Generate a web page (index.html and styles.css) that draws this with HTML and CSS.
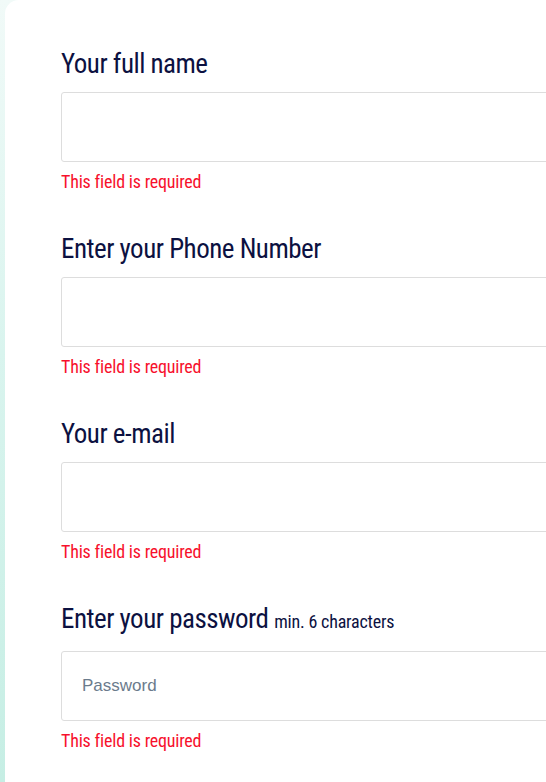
FILE: index.html
```html
<!DOCTYPE html>
<html lang="en">
<head>
<meta charset="utf-8">
<title>Sign up</title>
<link rel="stylesheet" href="styles.css">
</head>
<body>
<div class="page">
  <form class="card">
    <div class="field">
      <label class="label" for="name">Your full name</label>
      <input class="input" id="name" type="text">
      <div class="error">This field is required</div>
    </div>
    <div class="field">
      <label class="label" for="phone">Enter your Phone Number</label>
      <input class="input" id="phone" type="tel">
      <div class="error">This field is required</div>
    </div>
    <div class="field">
      <label class="label" for="email">Your e-mail</label>
      <input class="input" id="email" type="email">
      <div class="error">This field is required</div>
    </div>
    <div class="field">
      <label class="label label-pass" for="pass">Enter your password <span class="hint">min. 6 characters</span></label>
      <input class="input" id="pass" type="password" placeholder="Password">
      <div class="error">This field is required</div>
    </div>
  </form>
</div>
</body>
</html>
```
FILE: styles.css
```css
html, body {
  margin: 0;
  padding: 0;
  overflow: hidden;
}
body {
  width: 546px;
  height: 782px;
  background: linear-gradient(180deg, #f1faf8 0%, #d9f4ee 45%, #c6eee4 100%);
}
.page {
  padding-left: 5px;
  height: 100%;
  overflow: hidden;
}
.card {
  background: #ffffff;
  border-top-left-radius: 14px;
  height: 100%;
  width: 700px;
  box-sizing: border-box;
  padding: 48px 0 0 56px;
  font-family: Roboto, "Open Sans", sans-serif;
  font-stretch: 75%;
}
.field {
  display: flex;
  flex-direction: column;
  margin-bottom: 40px;
}
.label {
  display: block;
  font-size: 27px;
  line-height: 32px;
  letter-spacing: -0.5px;
  color: #0c1141;
  margin-bottom: 12px;
}
.label-pass {
  margin-bottom: 13px;
}
.hint {
  font-size: 18px;
  letter-spacing: -0.2px;
  color: #0c1141;
}
.input {
  box-sizing: border-box;
  width: 560px;
  height: 70px;
  border: 1px solid #dddddd;
  border-radius: 3px;
  padding: 0 20px;
  margin: 0;
  font-family: "Liberation Sans", Arial, sans-serif;
  font-stretch: normal;
  font-size: 17px;
  background: #ffffff;
  outline: none;
}
.input::placeholder {
  color: #6b7b8c;
}
.error {
  margin-top: 8px;
  font-size: 18px;
  line-height: 23px;
  letter-spacing: -0.2px;
  color: #f7102c;
}
```
